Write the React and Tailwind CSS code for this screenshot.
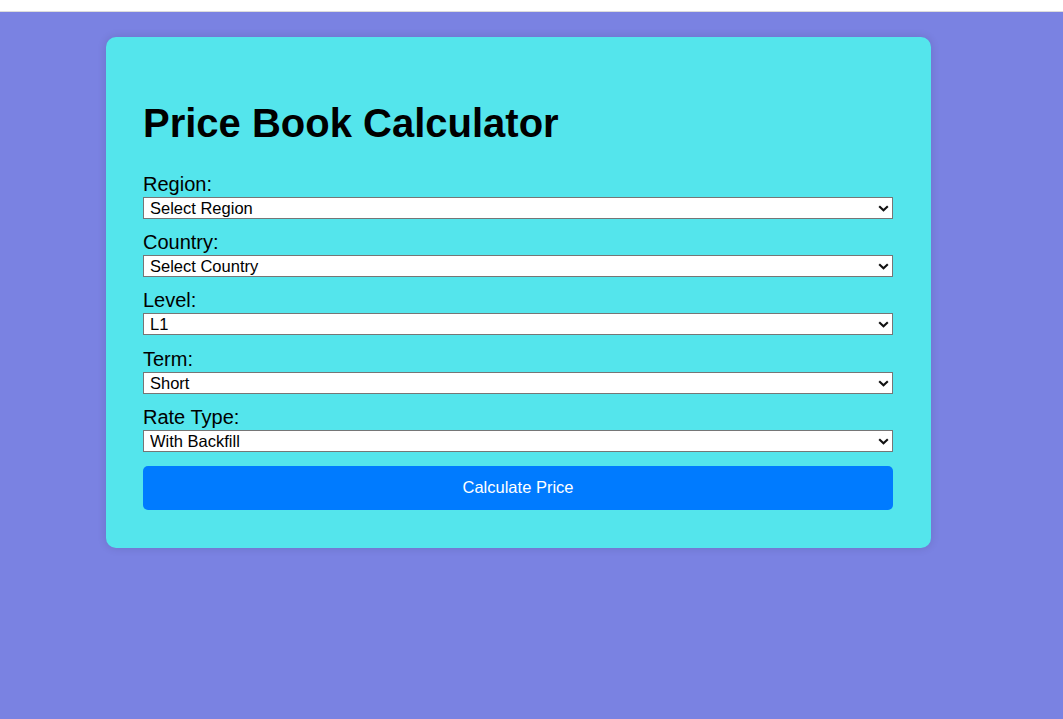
import React from "react";

const fields = [
  { label: "Region:", value: "Select Region" },
  { label: "Country:", value: "Select Country" },
  { label: "Level:", value: "L1" },
  { label: "Term:", value: "Short" },
  { label: "Rate Type:", value: "With Backfill" },
];

function Chevron() {
  return (
    <svg
      width="11"
      height="7"
      viewBox="0 0 11 7"
      className="absolute right-[4px] top-[8px] pointer-events-none"
    >
      <path d="M1.2 1.2 L5.5 5.3 L9.8 1.2" fill="none" stroke="#111" strokeWidth="2.1" />
    </svg>
  );
}

export default function App() {
  return (
    <div
      className="w-[1063px] h-[719px] bg-white flex flex-col"
      style={{ fontFamily: '"Liberation Sans", Arial, sans-serif' }}
    >
      <div className="h-[11px] bg-white" />
      <div className="h-px bg-[#dcdcdc]" />
      <div className="flex-1 bg-[#7a82e2] pt-[25px] pl-[106px]">
        <div className="w-[825px] bg-[#54e5ec] rounded-[10px] shadow-[0_0_10px_rgba(0,0,0,0.12)] pl-[37px] pr-[38px] pt-[63px] pb-[38px] text-black">
          <h1 className="text-[40px] font-bold leading-[46px] mb-[26.6px]">
            Price Book Calculator
          </h1>
          {fields.map((f) => (
            <div key={f.label} className="mb-[12.4px]">
              <label className="block text-[20px] leading-[23px]">{f.label}</label>
              <div className="relative mt-[1px] w-[750px] h-[22px]">
                <select
                  defaultValue={f.value}
                  className="appearance-none block w-[750px] h-[22px] text-[16.5px] bg-white border border-[#767676] text-black pl-[6px] pr-[20px] leading-[20px]"
                >
                  <option>{f.value}</option>
                </select>
                <Chevron />
              </div>
            </div>
          ))}
          <button className="mt-[1px] w-[750px] h-[44px] rounded-[5px] bg-[#007bff] text-white text-[16.5px]">
            Calculate Price
          </button>
        </div>
      </div>
    </div>
  );
}
